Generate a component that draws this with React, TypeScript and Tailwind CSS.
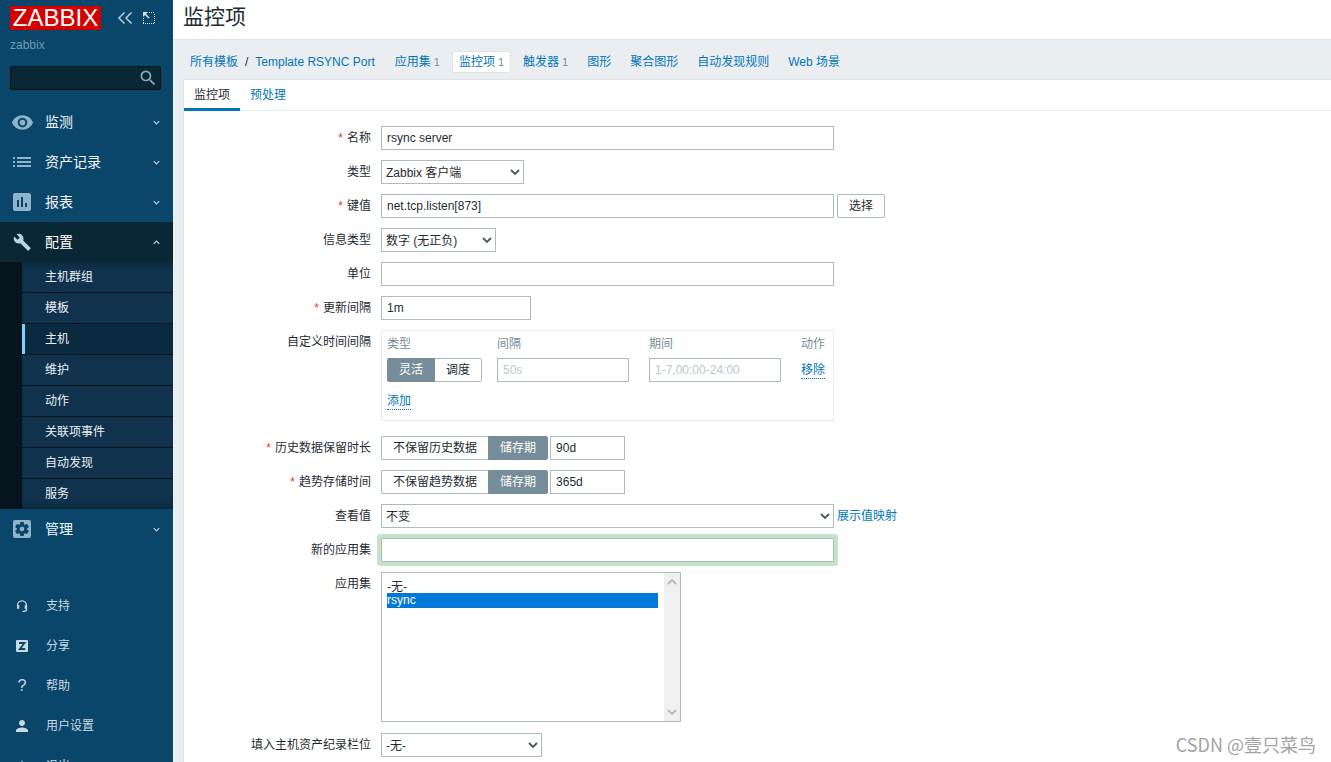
import React, { useState } from 'react';
import clsx from 'clsx';
import { MdPerson, MdPowerSettingsNew, MdRemoveRedEye, MdSearch } from 'react-icons/md';

const Chevron = ({ up, className }: { up?: boolean; className?: string }) => (
  <svg viewBox="0 0 10 10" className={className} fill="none" stroke="currentColor" aria-hidden="true">
    <path d={up ? 'M1 7 L5 3 L9 7' : 'M1 3 L5 7 L9 3'} strokeWidth="1.8" />
  </svg>
);

const ReportIcon = () => (
  <svg viewBox="0 0 18 18" className="size-[18px]" aria-hidden="true">
    <path fill="currentColor" fillRule="evenodd" d="M2 0h14a2 2 0 0 1 2 2v14a2 2 0 0 1-2 2H2a2 2 0 0 1-2-2V2a2 2 0 0 1 2-2zM4 7v7h2V7zM8 4v10h2V4zM12 10v4h2v-4z" />
  </svg>
);

const WrenchIcon = () => (
  <svg viewBox="0 0 24 24" className="size-[18px]" aria-hidden="true">
    <path fill="currentColor" d="M23.300 19.500l-9.700-9.600c.9-2.300.4-5-1.500-6.900-2-2-5-2.400-7.400-1.300L9 6 6 9 1.600 4.700C.4 7.100.9 10.100 2.900 12.100c1.900 1.900 4.600 2.400 6.900 1.500l9.700 9.700c.4.4 1 .4 1.400 0l2.300-2.300c.5-.4.5-1.100.1-1.500z" />
  </svg>
);

const GearIcon = () => (
  <svg viewBox="0 0 18 18" className="size-[18px]" aria-hidden="true">
    <rect width="18" height="18" rx="2" fill="currentColor" />
    <g fill="#0a466a">
      <circle cx="9" cy="9" r="5.200" />
      <rect x="7" y="2" width="4" height="14" rx="1" />
      <rect x="7" y="2" width="4" height="14" rx="1" transform="rotate(60 9 9)" />
      <rect x="7" y="2" width="4" height="14" rx="1" transform="rotate(120 9 9)" />
    </g>
    <circle cx="9" cy="9" r="2.300" fill="currentColor" />
  </svg>
);

const ListIcon = () => (
  <svg viewBox="0 0 18 12" className="h-3 w-[18px]" fill="currentColor" aria-hidden="true">
    <path d="M0 1h2v2H0zM4 1h14v2H4zM0 5h2v2H0zM4 5h14v2H4zM0 9h2v2H0zM4 9h14v2H4z" />
  </svg>
);

const HeadsetIcon = () => (
  <svg viewBox="0 0 12 12" className="size-3" fill="none" stroke="currentColor" aria-hidden="true">
    <path d="M1.500 6V5.300a4.500 4.500 0 0 1 9 0V9.500q0 1.800-2 1.800H6.500" strokeWidth="1.300" />
    <path d="M2.200 5.200v3.500M9.800 5.200v3.500" strokeWidth="2.200" />
  </svg>
);

const ShareIcon = () => (
  <svg viewBox="0 0 12 12" className="size-3" aria-hidden="true">
    <rect width="12" height="12" rx="1" fill="currentColor" />
    <path d="M3 3h5.500L3.800 9H9.200" fill="none" stroke="#0a466a" strokeWidth="1.800" />
  </svg>
);

const HelpIcon = () => <span className="text-base leading-4">?</span>;

const submenu = ['主机群组', '模板', '主机', '维护', '动作', '关联项事件', '自动发现', '服务'];

const footerMenu = [
  { label: '支持', icon: <HeadsetIcon /> },
  { label: '分享', icon: <ShareIcon /> },
  { label: '帮助', icon: <HelpIcon /> },
  { label: '用户设置', icon: <MdPerson size={18} /> },
  { label: '退出', icon: <MdPowerSettingsNew size={14} /> },
];

const MenuItem = ({ label, icon, open }: { label: string; icon: React.ReactNode; open?: boolean }) => (
  <a
    href="#"
    className={clsx('flex h-10 items-center pr-[13px] text-sm leading-5', open ? 'bg-[#0a2736] text-white' : 'text-[#f0f6fa]')}
  >
    <span className={clsx('mr-px flex w-11 shrink-0 justify-center', open ? 'text-[#b5d5e8]' : 'text-[#8fb3c9]')}>{icon}</span>
    <span className="flex-1">{label}</span>
    <Chevron up={open} className="size-[7px] text-[#b5cfdd]" />
  </a>
);

const Sidebar = () => (
  <aside className="flex w-[173px] shrink-0 flex-col overflow-hidden bg-[#0a466a]">
    <div className="pl-[10px] pr-3 pt-[6px]">
      <div className="flex items-center">
        <a href="#" className="flex h-6 w-[91px] items-center justify-center bg-[#d40000] text-2xl leading-6 text-white">ZABBIX</a>
        <button type="button" aria-label="收起" className="ml-4 text-[#b5cfdd]">
          <svg viewBox="0 0 16 14" className="h-[14px] w-4" fill="none" stroke="currentColor" strokeWidth="1.500">
            <path d="M7.500 1.500 L2 7 L7.500 12.500 M14.500 1.500 L9 7 L14.500 12.500" />
          </svg>
        </button>
        <button type="button" aria-label="隐藏" className="ml-[9px] text-[#d5e5ee]">
          <svg viewBox="0 0 14 14" className="size-[14px]" fill="none" stroke="currentColor">
            <path d="M7 1.500 H13 M12.500 3 V13 M1.500 7 V13 M1 12.500 H12" strokeDasharray="1 1" />
            <path d="M1 1 H6 L1 6 Z" fill="currentColor" stroke="none" />
            <path d="M2 2 L7 7" strokeWidth="1.500" />
          </svg>
        </button>
      </div>
      <div className="mt-[7px] text-xs leading-4 text-[#6f9ab3]">zabbix</div>
      <div className="mt-[13px] flex h-6 items-center rounded-[2px] border border-[#030f17] bg-[#0a2736] pr-[2px]">
        <input type="text" aria-label="搜索" className="w-full min-w-0 flex-1 bg-transparent px-1 text-white outline-none" />
        <button type="button" aria-label="搜索" className="text-[#8fa9b8]">
          <MdSearch size={20} />
        </button>
      </div>
    </div>
    <nav className="mt-3">
      <MenuItem label="监测" icon={<MdRemoveRedEye size={23} />} />
      <MenuItem label="资产记录" icon={<ListIcon />} />
      <MenuItem label="报表" icon={<ReportIcon />} />
      <MenuItem label="配置" icon={<WrenchIcon />} open />
      <ul className="border-l-[22px] border-[#06141d] bg-[#10324c] shadow-[inset_0_8px_6px_-6px_#0a2736,inset_0_-8px_6px_-6px_#0a2736]">
        {submenu.map((item) => (
          <li key={item} className="border-b border-[#06141d] last:border-b-0">
            <a
              href="#"
              className={clsx(
                'block h-[30px] border-l-[3px] pl-5 leading-[30px] text-[#e8f0f5]',
                item === '主机' ? 'border-[#7fd0ff] bg-[#0a2b3f]' : 'border-transparent',
              )}
            >
              {item}
            </a>
          </li>
        ))}
      </ul>
      <MenuItem label="管理" icon={<GearIcon />} />
    </nav>
    <nav className="mt-[37px] text-[#c7d9e3]">
      {footerMenu.map((item) => (
        <a key={item.label} href="#" className="flex h-10 items-center">
          <span className="mr-[2px] flex w-11 shrink-0 justify-center">{item.icon}</span>
          {item.label}
        </a>
      ))}
    </nav>
  </aside>
);

const link = 'text-[#0275b8]';
const field = 'h-6 border border-[#acbbc2] bg-white px-[5px] text-[#1f2c33] outline-none placeholder:text-[#c0c6ca]';

const Row = ({ label, id, required, children }: { label: string; id?: string; required?: boolean; children: React.ReactNode }) => (
  <div className="flex items-start gap-[10px]">
    <label htmlFor={id} className="w-[187px] shrink-0 text-right leading-6">
      {required && <span className="mr-1 text-[#e33734]">*</span>}
      {label}
    </label>
    <div className="flex min-w-0 flex-1 items-center">{children}</div>
  </div>
);

const Select = ({ id, className, value }: { id: string; className?: string; value: string }) => (
  <div className={clsx('relative', className)}>
    <select id={id} className="block h-6 w-full appearance-none border border-[#acbbc2] bg-white pl-1 pr-5 pt-px outline-none">
      <option>{value}</option>
    </select>
    <Chevron className="pointer-events-none absolute right-1 top-[7px] size-[10px] text-[#4c565c]" />
  </div>
);

const Segmented = ({ name, label, options, initial }: { name: string; label: string; options: string[]; initial: string }) => {
  const [value, setValue] = useState(initial);
  return (
    <div role="radiogroup" aria-label={label} className="flex">
      {options.map((option) => (
        <label
          key={option}
          className={clsx(
            'relative h-6 border px-[11px] leading-[22px] first:rounded-l-[2px] last:rounded-r-[2px]',
            value === option ? 'border-[#768d99] bg-[#768d99] text-white' : 'border-[#acbbc2] bg-white first:border-r-0 last:border-l-0',
          )}
        >
          <input type="radio" name={name} className="sr-only" checked={value === option} onChange={() => setValue(option)} />
          {option}
        </label>
      ))}
    </div>
  );
};

const IntervalTable = () => (
  <div className="mb-[5px] w-[453px] border border-[#ebeef0] pb-px pl-[5px]">
    <table className="w-full table-fixed border-collapse text-left">
      <thead>
        <tr className="h-[26px] text-[#768d99]">
          <th className="w-[110px] font-normal">类型</th>
          <th className="w-[152px] font-normal">间隔</th>
          <th className="w-[152px] font-normal">期间</th>
          <th className="font-normal">动作</th>
        </tr>
      </thead>
      <tbody>
        <tr className="h-[26px]">
          <td><Segmented name="interval_type" label="类型" options={['灵活', '调度']} initial="灵活" /></td>
          <td><input type="text" aria-label="间隔" placeholder="50s" className={clsx(field, 'block w-[132px]')} /></td>
          <td><input type="text" aria-label="期间" placeholder="1-7,00:00-24:00" className={clsx(field, 'block w-[132px]')} /></td>
          <td><button type="button" className={clsx(link, 'block border-b border-dotted border-[#0275b8] leading-4')}>移除</button></td>
        </tr>
        <tr className="h-9">
          <td colSpan={4}>
            <button type="button" className={clsx(link, 'block border-b border-dotted border-[#0275b8] leading-4')}>添加</button>
          </td>
        </tr>
      </tbody>
    </table>
  </div>
);

const ItemForm = () => (
  <form className="flex flex-col gap-[10px] pt-[15px]">
    <Row label="名称" id="name" required>
      <input id="name" type="text" defaultValue="rsync server" className={clsx(field, 'w-[453px]')} />
    </Row>
    <Row label="类型" id="type">
      <Select id="type" value="Zabbix 客户端" className="w-[143px]" />
    </Row>
    <Row label="键值" id="key" required>
      <input id="key" type="text" defaultValue="net.tcp.listen[873]" className={clsx(field, 'w-[453px]')} />
      <button type="button" className="ml-[3px] h-6 rounded-[2px] border border-[#acbbc2] px-[11px] leading-[22px]">选择</button>
    </Row>
    <Row label="信息类型" id="value_type">
      <Select id="value_type" value="数字 (无正负)" className="w-[115px]" />
    </Row>
    <Row label="单位" id="units">
      <input id="units" type="text" className={clsx(field, 'w-[453px]')} />
    </Row>
    <Row label="更新间隔" id="delay" required>
      <input id="delay" type="text" defaultValue="1m" className={clsx(field, 'w-[150px]')} />
    </Row>
    <Row label="自定义时间间隔">
      <IntervalTable />
    </Row>
    <Row label="历史数据保留时长" id="history" required>
      <Segmented name="history_mode" label="历史数据保留时长" options={['不保留历史数据', '储存期']} initial="储存期" />
      <input id="history" type="text" defaultValue="90d" className={clsx(field, 'ml-[2px] w-[75px]')} />
    </Row>
    <Row label="趋势存储时间" id="trends" required>
      <Segmented name="trends_mode" label="趋势存储时间" options={['不保留趋势数据', '储存期']} initial="储存期" />
      <input id="trends" type="text" defaultValue="365d" className={clsx(field, 'ml-[2px] w-[75px]')} />
    </Row>
    <Row label="查看值" id="valuemap">
      <Select id="valuemap" value="不变" className="w-[453px]" />
      <a href="#" className={clsx(link, 'ml-[3px]')}>展示值映射</a>
    </Row>
    <Row label="新的应用集" id="new_application">
      <input id="new_application" type="text" className={clsx(field, 'w-[453px] rounded-[1px] ring-4 ring-[#c5e3c6]')} />
    </Row>
    <Row label="应用集" id="applications">
      <div className="mb-px flex h-[150px] w-[300px] border border-[#acbbc2]">
        <select id="applications" multiple size={8} defaultValue={['rsync']} className="h-full min-w-0 flex-1 overflow-hidden bg-white py-1 pl-[5px] pr-[6px] outline-none">
          <option value="0" className="h-4 min-h-0 p-0 leading-[14px]">-无-</option>
          <option value="rsync" className="h-[15px] min-h-0 bg-[linear-gradient(#0078d7,#0078d7)] p-0 leading-[15px] [-webkit-text-fill-color:white]">rsync</option>
        </select>
        <div className="flex w-4 flex-col items-center justify-between bg-[#f0f0f0] py-1 text-[#b8b8b8]">
          <Chevron up className="size-[10px]" />
          <Chevron className="size-[10px]" />
        </div>
      </div>
    </Row>
    <Row label="填入主机资产纪录栏位" id="inventory">
      <Select id="inventory" value="-无-" className="w-[161px]" />
    </Row>
  </form>
);

const objectTabs = [
  { label: '应用集', count: 1 },
  { label: '监控项', count: 1 },
  { label: '触发器', count: 1 },
  { label: '图形' },
  { label: '聚合图形' },
  { label: '自动发现规则' },
  { label: 'Web 场景' },
];

const App = () => {
  return (
    <div className="relative flex h-screen overflow-hidden bg-[#ebeef0] font-['Liberation_Sans','Noto_Sans_CJK_SC',sans-serif] text-xs text-[#1f2c33]">
      <Sidebar />
      <main className="flex min-w-0 flex-1 flex-col">
        <header className="h-10 shrink-0 border-b border-[#dfe4e7] bg-white pl-[10px]">
          <h1 className="text-[21px] leading-[34px]">监控项</h1>
        </header>
        <nav className={clsx(link, 'flex h-[39px] shrink-0 items-center pl-[17px] pt-[5px]')}>
          <a href="#">所有模板</a>
          <span className="mx-[7px] text-[#1f2c33]">/</span>
          <a href="#">Template RSYNC Port</a>
          <ul className="ml-[14px] flex gap-[7px]">
            {objectTabs.map((tab) => (
              <li key={tab.label}>
                <a
                  href="#"
                  className={clsx('block px-[6px] leading-5', tab.label === '监控项' && 'rounded-[2px] bg-white shadow-[0_0_0_1px_#dfe4e7]')}
                >
                  {tab.label}
                  {tab.count && <span className="ml-[3px] text-[11px] text-[#768d99]">{tab.count}</span>}
                </a>
              </li>
            ))}
          </ul>
        </nav>
        <section className="ml-[10px] flex-1 overflow-hidden border-l border-t border-[#dfe4e7] bg-white">
          <div className="flex h-[31px] border-b border-[#ebeef0]">
            <a href="#" className="h-[31px] border-b-[3px] border-[#0275b8] px-[10px] leading-[30px]">监控项</a>
            <a href="#" className={clsx(link, 'px-[10px] leading-[30px]')}>预处理</a>
          </div>
          <ItemForm />
        </section>
      </main>
      <div className="pointer-events-none absolute bottom-[5px] right-[15px] font-['Noto_Sans_CJK_SC',sans-serif] text-lg leading-[26px] text-[#a3a3a3]">
        CSDN @壹只菜鸟
      </div>
    </div>
  );
};

export default App;
